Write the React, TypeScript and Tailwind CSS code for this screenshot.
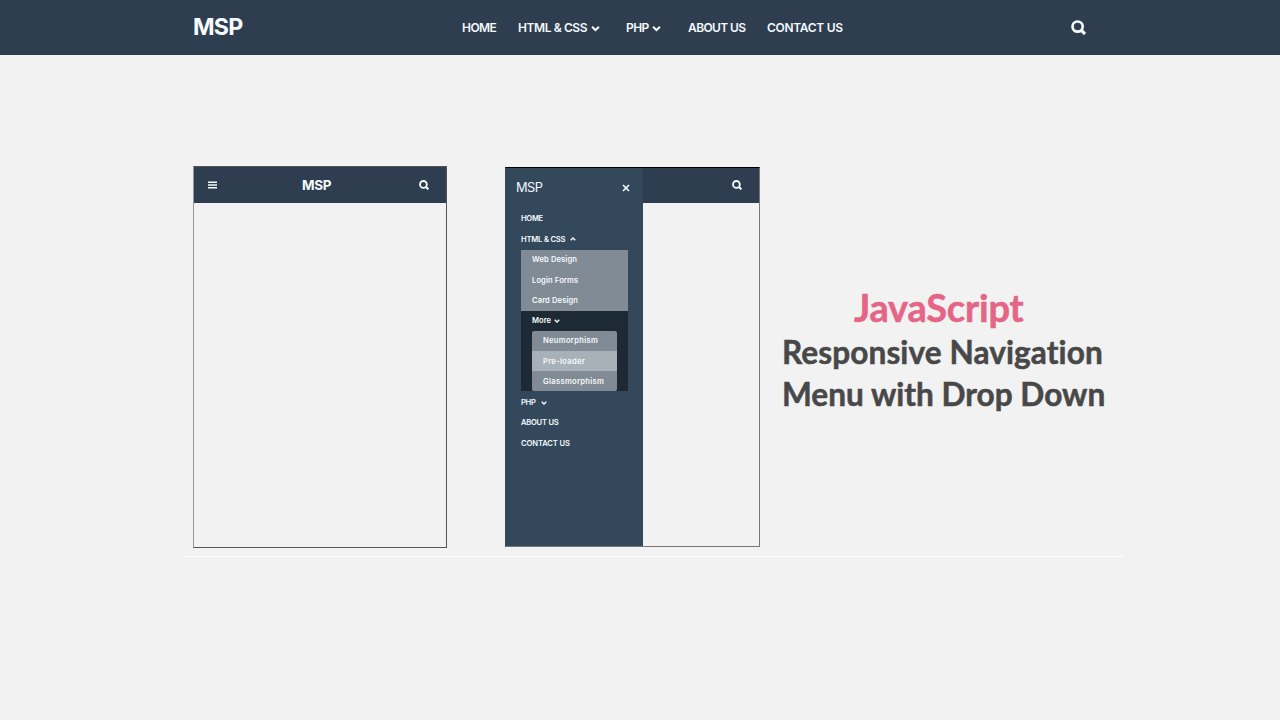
interface IconProps {
  className: string;
}

const Chevron = ({ className }: IconProps) => (
  <svg viewBox="0 0 10 10" className={className} fill="none" stroke="currentColor" strokeWidth="2.3">
    <path d="M1.2 3 L5 6.8 L8.8 3" />
  </svg>
);

const Search = ({ className }: IconProps) => (
  <svg viewBox="0 0 15 15" className={className} fill="none" stroke="currentColor" strokeWidth="2.7">
    <circle cx="6.6" cy="6.6" r="5.1" />
    <path d="M10.2 10.2 L14 14" strokeWidth="3.2" />
  </svg>
);

const Menu = ({ className }: IconProps) => (
  <svg viewBox="0 0 9 8" className={className} fill="none" stroke="currentColor" strokeWidth="1.4">
    <path d="M0 1.2 H9 M0 4 H9 M0 6.8 H9" />
  </svg>
);

const Close = ({ className }: IconProps) => (
  <svg viewBox="0 0 8 8" className={className} fill="none" stroke="currentColor" strokeWidth="1.6">
    <path d="M1 1 L7 7 M7 1 L1 7" />
  </svg>
);

const links = [
  { label: 'HOME', box: 'w-[56px]', text: 'w-[34px] tracking-[-0.55px]' },
  { label: 'HTML & CSS', box: 'w-[108px]', text: 'w-[69px] tracking-[-0.4px]', arrow: true },
  { label: 'PHP', box: 'w-[62px]', text: 'w-[22px] tracking-[-0.6px]', arrow: true },
  { label: 'ABOUT US', box: 'w-[79px]', text: 'w-[58px] tracking-[-0.6px]' },
  { label: 'CONTACT US', box: 'w-[77px]', text: 'w-[76px] tracking-[-0.3px]' },
];

const Navbar = () => (
  <nav className="h-[55px] bg-[#2e3e50] text-[#f5fafc] flex items-center pl-[193px]">
    <div className="w-[269px] pt-px text-[23.2px] leading-none font-bold tracking-[-0.8px]">MSP</div>
    <ul className="flex w-[608.5px] pt-px">
      {links.map((link) => (
        <li key={link.label} className={`flex items-center shrink-0 ${link.box}`}>
          <span className={`text-[12px] font-semibold whitespace-nowrap ${link.text}`}>{link.label}</span>
          {link.arrow && <Chevron className="w-[9px] h-[9px] ml-[4px] shrink-0" />}
        </li>
      ))}
    </ul>
    <Search className="w-[15px] h-[15px]" />
  </nav>
);

const ClosedPhone = () => (
  <div className="w-[254px] h-[382px] border border-[#555] border-l-[#999]">
    <div className="h-[36px] bg-[#2e3e50] text-[#f5fafc] flex items-center pl-[14px]">
      <Menu className="w-[9px] h-[8px]" />
      <span className="ml-[85px] w-[117px] pt-[2px] text-[13.5px] leading-none font-bold tracking-[-0.3px]">MSP</span>
      <Search className="w-[10px] h-[10px]" />
    </div>
  </div>
);

const OpenPhone = () => (
  <div className="w-[255px] h-[380px] border border-[#777] border-t-black border-l-[#34485c] flex">
    <div className="w-[137px] bg-[#34485c] text-[#f5fafc] text-[7.6px] font-semibold whitespace-nowrap">
      <div className="h-[39px] pl-[10px] pr-[13px] flex items-center justify-between">
        <span className="text-[12.8px] font-normal tracking-[-0.5px]">MSP</span>
        <Close className="w-[8px] h-[8px]" />
      </div>
      <ul className="pl-[15px] pr-[15px]">
        <li className="h-[21px] pt-[2px] flex items-center tracking-[-0.3px]">HOME</li>
        <li className="h-[21.5px] pt-px flex items-center tracking-[-0.2px]">
          HTML &amp; CSS
          <Chevron className="w-[6px] h-[6px] ml-[5px] rotate-180" />
        </li>
        <li className="bg-[#808b96] h-[61px] tracking-[0.1px]">
          <div className="h-[20.3px] pl-[11px] flex items-center">Web Design</div>
          <div className="h-[20.3px] pl-[11px] pt-px flex items-center">Login Forms</div>
          <div className="h-[20.3px] pl-[11px] flex items-center">Card Design</div>
        </li>
        <li className="bg-[#1d2a35] h-[80.5px] pl-[11px] pr-[11px]">
          <div className="h-[20px] flex items-center">
            More
            <Chevron className="w-[6px] h-[6px] ml-[3px]" />
          </div>
          <div className="h-[60.5px] rounded-[2px] overflow-hidden bg-[#808b96] tracking-[0.3px]">
            <div className="h-[20px] pl-[11px] flex items-center">Neumorphism</div>
            <div className="h-[20.5px] pl-[11px] pt-px flex items-center bg-[#a8b0b8]">Pre-loader</div>
            <div className="h-[20px] pl-[11px] pt-px flex items-center">Glassmorphism</div>
          </div>
        </li>
        <li className="h-[21px] pt-[2px] flex items-center tracking-[-0.3px]">
          PHP
          <Chevron className="w-[6px] h-[6px] ml-[5px]" />
        </li>
        <li className="h-[20.3px] pt-[2px] flex items-center tracking-[-0.25px]">ABOUT US</li>
        <li className="h-[20.3px] pt-[2px] flex items-center tracking-[-0.1px]">CONTACT US</li>
      </ul>
    </div>
    <div className="flex-1">
      <div className="h-[35px] bg-[#2e3e50] text-[#f5fafc] flex items-center pl-[88.5px] pb-px">
        <Search className="w-[10px] h-[10px]" />
      </div>
    </div>
  </div>
);

const App = () => {
  return (
    <div className="h-[720px] w-[1280px] overflow-hidden bg-[#f2f2f2] font-['Inter',sans-serif]">
      <Navbar />
      <main className="ml-[184px] w-[939px] h-[502px] border-b border-white pt-[111px] pl-[9px] flex items-start">
        <ClosedPhone />
        <div className="ml-[58px] mt-[1px]">
          <OpenPhone />
        </div>
        <h1 className="ml-[22px] mt-[118px] font-['Lato',sans-serif] font-bold text-[#484848] whitespace-nowrap [font-variant-ligatures:none] [-webkit-text-stroke:0.5px_currentColor]">
          <span className="block pl-[72px] text-[38px] leading-[46px] tracking-[-0.2px] text-[#e56587]">JavaScript</span>
          <span className="block pt-px text-[31.6px] leading-[42px] tracking-[0.08px]">Responsive Navigation</span>
          <span className="block text-[31.6px] leading-[42px]">Menu with Drop Down</span>
        </h1>
      </main>
    </div>
  );
};

export default App;
